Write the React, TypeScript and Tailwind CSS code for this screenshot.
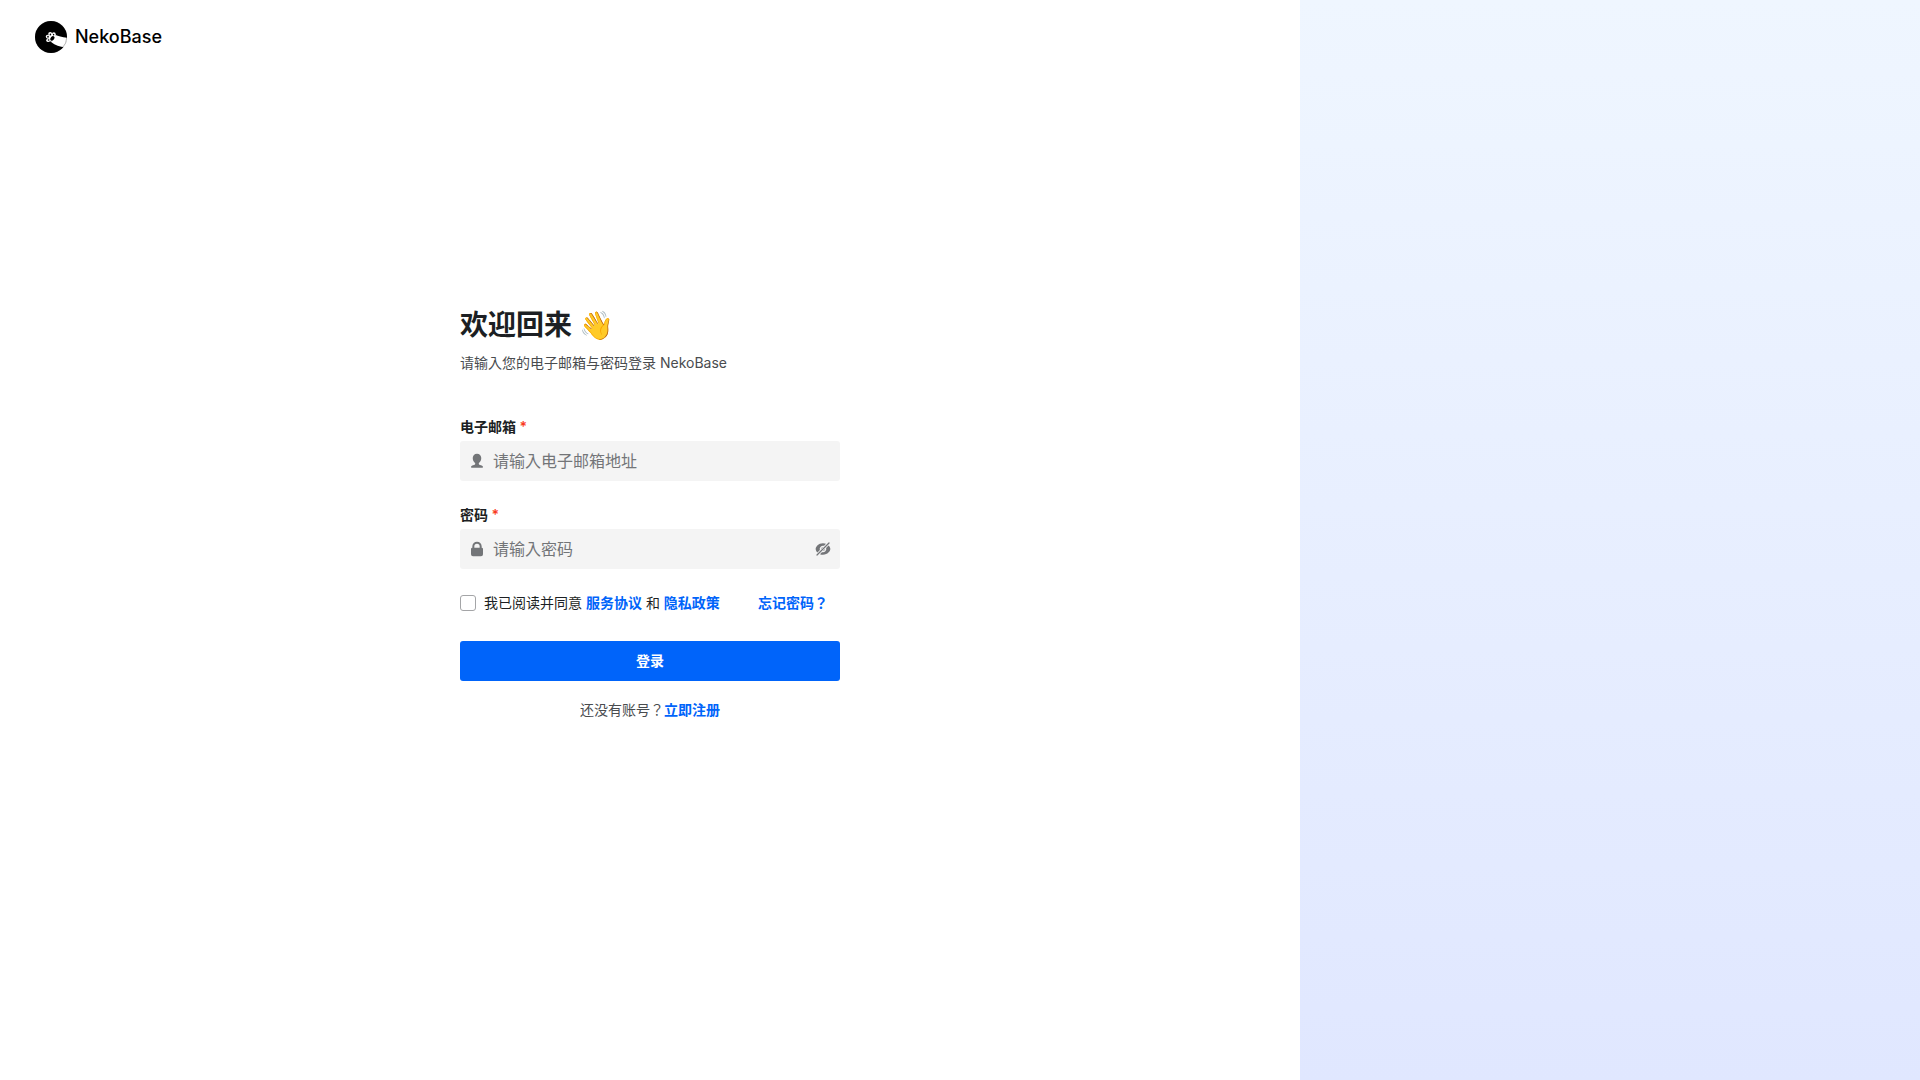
/**
 * Login page — email and password sign-in for NekoBase.
 *
 * Form on the left, decorative gradient panel on the right.
 */

import { useState } from 'react';
import type { FormEvent, ReactNode } from 'react';

function Logo() {
  return (
    <svg className="w-8 h-8" viewBox="0 0 32 32" aria-hidden="true">
      <circle cx="16" cy="16" r="16" fill="#000" />
      {/* Arm */}
      <path
        d="M20.6 14C23 15.2 27 16.2 32 16.8V20L30 26.2C25 26 20 24 16.4 21.2L17 18Z"
        fill="#fff"
      />
      {/* Toes */}
      <g fill="#fff">
        <circle cx="13.2" cy="19.2" r="1.9" />
        <circle cx="12.7" cy="15.6" r="1.9" />
        <circle cx="15.2" cy="12.9" r="2" />
        <circle cx="18.8" cy="13.2" r="1.9" />
        <circle cx="17.2" cy="17" r="3.7" />
      </g>
      {/* Pads */}
      <g fill="#000">
        <ellipse cx="17.4" cy="17.4" rx="2.6" ry="1.8" transform="rotate(-50 17.4 17.4)" />
        <ellipse cx="13.6" cy="19" rx="0.9" ry="0.7" />
        <ellipse cx="13" cy="15.8" rx="0.8" ry="1" />
        <ellipse cx="15.4" cy="13.4" rx="0.8" ry="1" />
        <ellipse cx="18.6" cy="13.6" rx="0.7" ry="0.9" />
      </g>
      <circle cx="16" cy="16" r="15.8" fill="none" stroke="#000" strokeWidth="0.3" />
    </svg>
  );
}

function UserIcon() {
  return (
    <svg className="w-4 h-4" viewBox="0 0 24 24" fill="currentColor" aria-hidden="true">
      <path d="M12 1C8.2 1 5.6 3.8 5.6 7.6c0 3.2 1.3 6 3.7 7.6v1.4c0 .8-.6 1.2-1.6 1.5C5.2 18.7 3 19.2 3 21c0 .7.4 1 1 1h16c.6 0 1-.3 1-1 0-1.8-2.2-2.300-4.700-2.900-1-.300-1.600-.700-1.600-1.500v-1.400c2.400-1.600 3.700-4.400 3.700-7.600C18.400 3.800 15.800 1 12 1Z" />
    </svg>
  );
}

function LockIcon() {
  return (
    <svg className="w-4 h-4" viewBox="0 0 24 24" fill="currentColor" aria-hidden="true">
      <path
        fillRule="evenodd"
        d="M5 10V8a7 7 0 0 1 14 0v2a2 2 0 0 1 2 2v8a3 3 0 0 1-3 3H6a3 3 0 0 1-3-3v-8a2 2 0 0 1 2-2Zm3 0h8V8a4 4 0 0 0-8 0v2Z"
      />
    </svg>
  );
}

function EyeClosedIcon() {
  return (
    <svg className="w-4 h-4" viewBox="0 0 24 24" fill="currentColor" aria-hidden="true">
      <path d="M21.7 2.3a1 1 0 0 1 0 1.4l-18 18a1 1 0 0 1-1.4-1.4l18-18a1 1 0 0 1 1.4 0Z" />
      <path d="M12 3.5c1.7 0 3.2.3 4.5.8L13.6 7.3A5 5 0 0 0 7.3 13.6L3.7 17.2C1.9 15.7 1 13.5 1 12c0-3 4-8.5 11-8.5Z" />
      <path d="M12 20.5c-1.7 0-3.2-.3-4.5-.8l2.9-3a5 5 0 0 0 6.3-6.3l3.6-3.6C22.1 8.3 23 10.5 23 12c0 3-4 8.5-11 8.5Z" />
      <path d="M12.1 9.2 9.2 12.1A2.8 2.8 0 0 1 12.1 9.2ZM11.9 14.8l2.9-2.9a2.8 2.8 0 0 1-2.9 2.9Z" />
    </svg>
  );
}

interface FieldProps {
  id: string;
  label: string;
  type: string;
  placeholder: string;
  icon: ReactNode;
  suffix?: ReactNode;
}

function Field({ id, label, type, placeholder, icon, suffix }: FieldProps) {
  return (
    <div className="flex flex-col gap-1">
      <label htmlFor={id} className="text-sm font-semibold text-[#1c1f23]">
        {label} <span className="text-[#f93920]">*</span>
      </label>
      <div className="flex items-center gap-2 h-10 px-2 rounded-[3px] border border-transparent bg-[#f4f4f4] text-[#737578] focus-within:border-[#0064fa]">
        {icon}
        <input
          id={id}
          name={id}
          type={type}
          placeholder={placeholder}
          className="flex-1 min-w-0 bg-transparent text-base text-[#1c1f23] placeholder:text-[#737578] outline-none"
        />
        {suffix}
      </div>
    </div>
  );
}

export default function App() {
  const [showPassword, setShowPassword] = useState(false);
  const [agreed, setAgreed] = useState(false);

  const handleSubmit = (e: FormEvent) => {
    e.preventDefault();
  };

  return (
    <div className="flex min-h-screen bg-white font-[Inter,'Noto_Sans_CJK_JP',sans-serif] text-[#1c1f23]">
      <div className="flex-1 flex flex-col">
        {/* Header */}
        <header className="flex items-center gap-2 px-[35px] py-[21px]">
          <Logo />
          <span className="text-lg font-medium text-black">NekoBase</span>
        </header>

        {/* Form */}
        <main className="flex-1 flex flex-col items-center justify-center px-4 pb-[129px]">
          <div className="w-full max-w-[380px]">
            <h1 className="text-[28px] leading-10 font-semibold">欢迎回来 👋</h1>
            <p className="mt-2 text-sm text-[#494c4f]">请输入您的电子邮箱与密码登录 NekoBase</p>

            <form className="mt-11 flex flex-col gap-6" onSubmit={handleSubmit}>
              <Field
                id="email"
                label="电子邮箱"
                type="email"
                placeholder="请输入电子邮箱地址"
                icon={<UserIcon />}
              />
              <Field
                id="password"
                label="密码"
                type={showPassword ? 'text' : 'password'}
                placeholder="请输入密码"
                icon={<LockIcon />}
                suffix={
                  <button
                    type="button"
                    aria-label="显示密码"
                    className="cursor-pointer"
                    onClick={() => setShowPassword(!showPassword)}
                  >
                    <EyeClosedIcon />
                  </button>
                }
              />

              <div className="flex items-center justify-between text-sm">
                <div className="flex items-center gap-2">
                  <input
                    id="agree"
                    type="checkbox"
                    checked={agreed}
                    onChange={(e) => setAgreed(e.target.checked)}
                    className="appearance-none w-4 h-4 rounded-[3px] border border-[#a4a5a7] bg-white checked:bg-[#0064fa] checked:border-[#0064fa]"
                  />
                  <label htmlFor="agree">
                    我已阅读并同意{' '}
                    <a href="#terms" className="font-semibold text-[#0064fa]">服务协议</a> 和{' '}
                    <a href="#privacy" className="font-semibold text-[#0064fa]">隐私政策</a>
                  </label>
                </div>
                <a href="#forgot" className="px-3 font-semibold text-[#0064fa]">忘记密码？</a>
              </div>

              <button
                type="submit"
                className="mt-1 h-10 rounded-[3px] bg-[#0064fa] text-sm font-semibold text-white cursor-pointer"
              >
                登录
              </button>
            </form>

            <p className="mt-[19px] text-center text-sm text-[#494c4f]">
              还没有账号？<a href="#register" className="font-semibold text-[#0064fa]">立即注册</a>
            </p>
          </div>
        </main>
      </div>

      {/* Side panel */}
      <aside className="w-[620px] bg-linear-to-b/srgb from-[#eff6ff] to-[#e0e7ff]" />
    </div>
  );
}
